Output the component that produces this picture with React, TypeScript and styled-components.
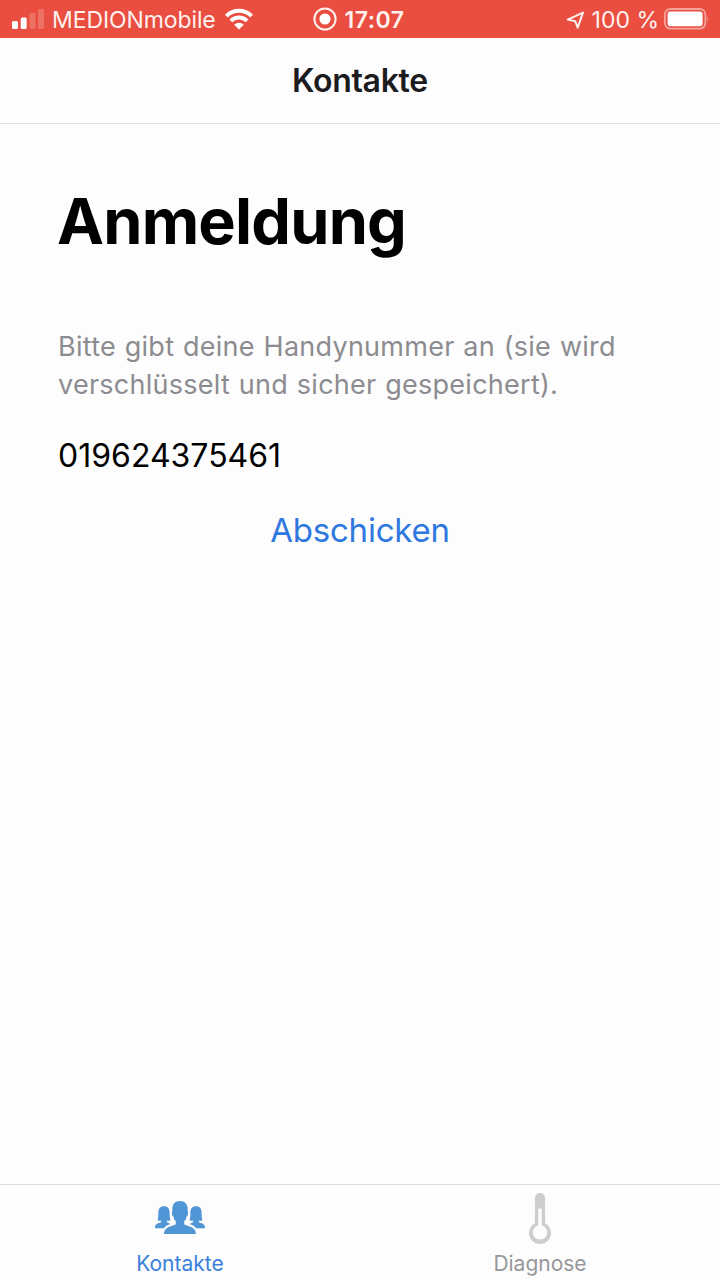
import React from "react";
import styled, { createGlobalStyle } from "styled-components";

const GlobalStyle = createGlobalStyle`
  *, *::before, *::after { box-sizing: border-box; }
  body { margin: 0; background: #fdfdfd; font-family: Inter, "Liberation Sans", sans-serif; }
  h1, h2, p { margin: 0; }
  button, input { border: 0; padding: 0; background: none; font-family: inherit; }
  svg { display: block; flex: none; }
`;

const Screen = styled.div`
  width: 720px;
  height: 1280px;
  display: flex;
  flex-direction: column;
  background: #fdfdfd;
  overflow: hidden;
`;

const StatusBar = styled.div`
  height: 38px;
  flex: none;
  display: grid;
  grid-template-columns: 1fr auto 1fr;
  padding: 0 11px 0 12px;
  background: #ea4e40;
  color: #fff1ee;
`;

const StatusGroup = styled.div<{ $align?: string }>`
  display: flex;
  align-items: center;
  justify-content: ${(p) => p.$align ?? "flex-start"};
  height: 38px;
`;

const StatusText = styled.span<{ $weight?: number; $spacing?: number; $margin?: string }>`
  font-size: 23px;
  font-weight: ${(p) => p.$weight ?? 400};
  letter-spacing: ${(p) => p.$spacing ?? 0}px;
  line-height: 38px;
  margin: ${(p) => p.$margin ?? "0"};
  padding-top: 1px;
  white-space: pre;
`;

const NavBar = styled.header`
  height: 86px;
  flex: none;
  display: flex;
  align-items: center;
  justify-content: center;
  border-bottom: 1px solid #dfdfe1;
`;

const NavTitle = styled.h2`
  font-size: 32px;
  line-height: 40px;
  font-weight: 600;
  letter-spacing: -0.3px;
  color: #1c1c1e;
`;

const Content = styled.main`
  flex: 1;
  display: flex;
  flex-direction: column;
  padding: 57px 58px 0;
`;

const Heading = styled.h1`
  font-size: 63px;
  line-height: 80px;
  font-weight: 700;
  letter-spacing: -0.8px;
  margin-left: -1px;
  color: #000;
`;

const Hint = styled.p`
  margin-top: 67px;
  font-size: 27px;
  line-height: 38.4px;
  letter-spacing: 0.26px;
  word-spacing: 0.9px;
  color: #8c8c90;
  white-space: nowrap;
`;

const PhoneInput = styled.input`
  margin-top: 31px;
  height: 40px;
  width: 100%;
  font-size: 32px;
  line-height: 40px;
  letter-spacing: 0;
  color: #000;
  outline: none;
`;

const SubmitButton = styled.button`
  align-self: center;
  margin-top: 33px;
  font-size: 33px;
  line-height: 42px;
  letter-spacing: -0.2px;
  color: #2f78e0;
`;

const TabBar = styled.nav`
  height: 96px;
  flex: none;
  display: grid;
  grid-template-columns: 1fr 1fr;
  border-top: 1px solid #dedee0;
`;

const Tab = styled.div<{ $active?: boolean }>`
  display: flex;
  flex-direction: column;
  align-items: center;
  padding-top: 7px;
  color: ${(p) => (p.$active ? "#3a80dc" : "#97979b")};
`;

const TabLabel = styled.span`
  margin-top: 6px;
  font-size: 21px;
  line-height: 28px;
`;

const SignalIcon = () => (
  <svg width="32" height="22" viewBox="0 0 32 22" fill="#fff">
    <rect x="0" y="13" width="6" height="8" rx="1.6" />
    <rect x="8.7" y="9.5" width="6" height="11.5" rx="1.6" />
    <rect x="17.5" y="5" width="6" height="16" rx="1.6" opacity=".2" />
    <rect x="26" y="1" width="6" height="20" rx="1.6" opacity=".2" />
  </svg>
);

const WifiIcon = () => (
  <svg width="28" height="22" viewBox="0 0 28 22">
    <g fill="none" stroke="#fff" strokeWidth="4">
      <path d="M1.4 8.1a17.8 17.8 0 0 1 25.2 0" />
      <path d="M5.9 12.9a11.5 11.5 0 0 1 16.2 0" />
    </g>
    <path d="M14 21.5l-4.8-4.8a6.8 6.8 0 0 1 9.6 0z" fill="#fff" />
  </svg>
);

const RecordIcon = () => (
  <svg width="24" height="24" viewBox="0 0 24 24">
    <circle cx="12" cy="12" r="10.6" fill="none" stroke="#fff1ee" strokeWidth="2" />
    <circle cx="12" cy="12" r="5.6" fill="#fff" />
  </svg>
);

const LocationIcon = () => (
  <svg width="19" height="19" viewBox="0 0 19 19" fill="none" stroke="#fff1ee" strokeWidth="2" strokeLinejoin="round">
    <path d="M17 2.6L1.7 9.6l7.5 1.6 2.5 6.5z" />
  </svg>
);

const BatteryIcon = () => (
  <svg width="46" height="22" viewBox="0 0 46 22">
    <rect x="1.8" y="1" width="40.6" height="19.6" rx="5.5" fill="none" stroke="#fff" strokeOpacity=".48" strokeWidth="1.8" />
    <rect x="4.6" y="3.6" width="35" height="14.6" rx="3" fill="#fff" />
    <path d="M44.4 7.5q1.6 3.3 0 6.6z" fill="#fff" fillOpacity=".5" />
  </svg>
);

const PeopleIcon = () => (
  <svg width="52" height="52" viewBox="0 0 52 52" fill="#5096d6">
    <path d="M10 14.2C13.8 14.2 15.6 16.8 15.6 20.2C15.6 23.6 15.7 26 16.5 28C15.2 28.9 13.8 29 12.8 28.7V30.1C13.8 31 15 31.5 16.4 32C13.2 33 11.2 34 10 36.2H1C1 32.5 2.6 31.5 7.2 30.3V28.7C6 29 4.7 28.9 3.5 28C4.3 26 4.4 23.6 4.4 20.2C4.4 16.8 6.2 14.2 10 14.2Z" />
    <path d="M42 14.2C45.8 14.2 47.6 16.8 47.6 20.2C47.6 23.6 47.7 26 48.5 28C47.3 28.9 46 29 44.8 28.7V30.3C49.4 31.5 51 32.5 51 36.2H42C40.8 34 38.8 33 35.6 32C37 31.5 38.2 31 39.2 30.1V28.7C38.2 29 36.8 28.9 35.5 28C36.3 26 36.4 23.6 36.4 20.2C36.4 16.8 38.2 14.2 42 14.2Z" />
    <path d="M26 9C31 9 33.7 12.4 33.7 17V19.3C34.6 20.2 34.1 23.9 32.7 24.4C32.2 26.7 31.4 28.2 30.2 29.2V32C31 34.3 41.8 33.4 42 42H10C10.2 33.4 21 34.3 21.8 32V29.2C20.6 28.2 19.8 26.7 19.3 24.4C17.9 23.9 17.4 20.2 18.3 19.3V17C18.3 12.4 21 9 26 9Z" />
  </svg>
);

const ThermometerIcon = () => (
  <svg width="24" height="52" viewBox="0 0 24 52">
    <path
      fill="#cececf"
      fillRule="evenodd"
      d="M12 1C15 1 17.1 3.1 17.1 6V31.2A11 11 0 1 1 6.9 31.2V6C6.9 3.1 9 1 12 1ZM12 16.2C10.8 16.2 10.3 17 10.3 18V33.4A7.2 7.2 0 1 0 13.7 33.4V18C13.7 17 13.2 16.2 12 16.2Z"
    />
  </svg>
);

export default function App() {
  return (
    <Screen>
      <GlobalStyle />
      <StatusBar>
        <StatusGroup>
          <SignalIcon />
          <StatusText $spacing={-0.1} $margin="0 9px 0 8px">MEDIONmobile</StatusText>
          <WifiIcon />
        </StatusGroup>
        <StatusGroup $align="center">
          <RecordIcon />
          <StatusText $weight={600} $spacing={0.5} $margin="0 3px 0 7px">17:07</StatusText>
        </StatusGroup>
        <StatusGroup $align="flex-end">
          <LocationIcon />
          <StatusText $margin="0 4px 0 7px">100 %</StatusText>
          <BatteryIcon />
        </StatusGroup>
      </StatusBar>
      <NavBar>
        <NavTitle>Kontakte</NavTitle>
      </NavBar>
      <Content>
        <Heading>Anmeldung</Heading>
        <Hint>
          Bitte gibt deine Handynummer an (sie wird
          <br />
          verschlüsselt und sicher gespeichert).
        </Hint>
        <PhoneInput type="tel" defaultValue="019624375461" aria-label="Handynummer" />
        <SubmitButton type="button">Abschicken</SubmitButton>
      </Content>
      <TabBar>
        <Tab $active>
          <PeopleIcon />
          <TabLabel>Kontakte</TabLabel>
        </Tab>
        <Tab>
          <ThermometerIcon />
          <TabLabel>Diagnose</TabLabel>
        </Tab>
      </TabBar>
    </Screen>
  );
}
